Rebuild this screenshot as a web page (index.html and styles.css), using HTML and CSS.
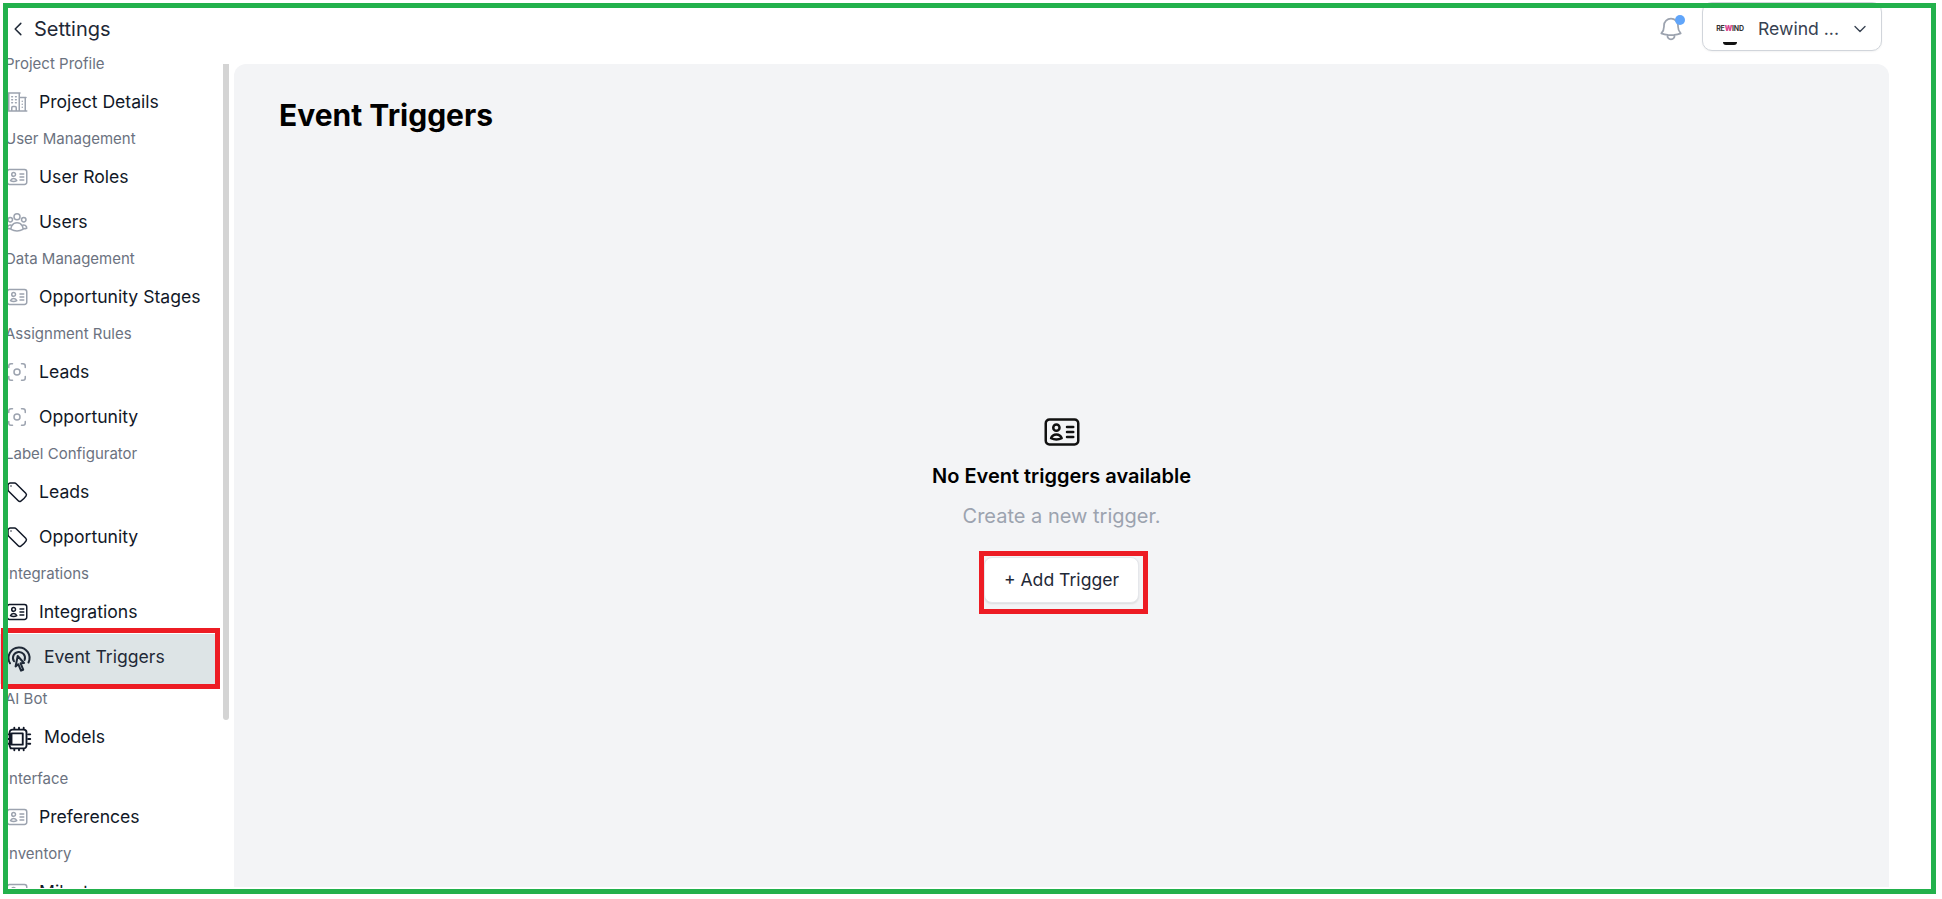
FILE: index.html
```html
<!DOCTYPE html>
<html lang="en">
<head>
    <meta charset="UTF-8">
    <meta name="viewport" content="width=device-width, initial-scale=1.0">
    <title>Event Triggers</title>
    <link rel="stylesheet" href="styles.css">
</head>
<body>
    <svg class="defs" width="0" height="0">
        <symbol id="i-card" viewBox="0 0 24 24"><path d="M15 9h3.75M15 12h3.75M15 15h3.75M4.5 19.5h15a2.25 2.25 0 002.25-2.25V6.75A2.25 2.25 0 0019.5 4.5h-15a2.25 2.25 0 00-2.25 2.25v10.5A2.25 2.25 0 004.5 19.5zm6-10.125a1.875 1.875 0 11-3.75 0 1.875 1.875 0 013.75 0zm1.294 6.336a6.721 6.721 0 01-3.17.789 6.721 6.721 0 01-3.168-.789 3.376 3.376 0 016.338 0z"/></symbol>
        <symbol id="i-view" viewBox="0 0 24 24"><path d="M7.5 3.75H6A2.25 2.25 0 003.75 6v1.5M16.5 3.75H18A2.25 2.25 0 0120.25 6v1.5m0 9V18A2.25 2.25 0 0118 20.25h-1.5m-9 0H6A2.25 2.25 0 013.75 18v-1.5M15 12a3 3 0 11-6 0 3 3 0 016 0z"/></symbol>
        <symbol id="i-tag" viewBox="0 0 24 24"><path d="M9.568 3H5.25A2.25 2.25 0 003 5.25v4.318c0 .597.237 1.17.659 1.591l9.581 9.581c.699.699 1.78.872 2.607.33a18.095 18.095 0 005.223-5.223c.542-.827.369-1.908-.33-2.607L11.16 3.66A2.25 2.25 0 009.568 3z"/><path d="M6 6h.008v.008H6V6z"/></symbol>
    </svg>

    <div class="shot">
        <header class="topbar">
            <div class="back">
                <svg class="back-icon" viewBox="0 0 24 24"><path d="M15.75 19.5L8.25 12l7.5-7.5"/></svg>
                <span>Settings</span>
            </div>
            <div class="top-right">
                <div class="bell">
                    <svg viewBox="0 0 24 24"><path d="M14.857 17.082a23.848 23.848 0 005.454-1.31A8.967 8.967 0 0118 9.75v-.7V9A6 6 0 006 9v.75a8.967 8.967 0 01-2.312 6.022c1.733.64 3.56 1.085 5.455 1.31m5.714 0a24.255 24.255 0 01-5.714 0m5.714 0a3 3 0 11-5.714 0"/></svg>
                    <span class="bell-dot"></span>
                </div>
                <div class="project-select">
                    <div class="logo"><span>RE<b>W</b>IND</span></div>
                    <span class="project-name">Rewind ...</span>
                    <svg class="chev" viewBox="0 0 24 24"><path d="M19.5 8.25l-7.5 7.5-7.5-7.5"/></svg>
                </div>
            </div>
        </header>

        <div class="content">
            <nav class="sidebar">
                <p class="group">Project Profile</p>
                <a class="item muted">
                    <svg class="icon" viewBox="0 0 24 24"><path d="M2.25 21h19.5m-18-18v18m10.5-18v18m6-13.5V21M6.75 6.75h.75m-.75 3h.75m-.75 3h.75m3-6h.75m-.75 3h.75m-.75 3h.75M6.75 21v-3.375c0-.621.504-1.125 1.125-1.125h2.25c.621 0 1.125.504 1.125 1.125V21M3 3h12m-.75 4.5H21m-3.75 3.75h.008v.008h-.008v-.008zm0 3h.008v.008h-.008v-.008zm0 3h.008v.008h-.008v-.008z"/></svg>
                    Project Details
                </a>
                <p class="group">User Management</p>
                <a class="item muted"><svg class="icon"><use href="#i-card"/></svg>User Roles</a>
                <a class="item muted">
                    <svg class="icon" viewBox="0 0 24 24"><path d="M18 18.72a9.094 9.094 0 003.741-.479 3 3 0 00-4.682-2.72m.94 3.198l.001.031c0 .225-.012.447-.037.666A11.944 11.944 0 0112 21c-2.17 0-4.207-.576-5.963-1.584A6.062 6.062 0 016 18.719m12 0a5.971 5.971 0 00-.941-3.197m0 0A5.995 5.995 0 0012 12.75a5.995 5.995 0 00-5.058 2.772m0 0a3 3 0 00-4.681 2.72 8.986 8.986 0 003.74.477m.94-3.197a5.971 5.971 0 00-.94 3.197M15 6.75a3 3 0 11-6 0 3 3 0 016 0zm6 3a2.25 2.25 0 11-4.5 0 2.25 2.25 0 014.5 0zm-13.5 0a2.25 2.25 0 11-4.5 0 2.25 2.25 0 014.5 0z"/></svg>
                    Users
                </a>
                <p class="group">Data Management</p>
                <a class="item muted"><svg class="icon"><use href="#i-card"/></svg>Opportunity Stages</a>
                <p class="group">Assignment Rules</p>
                <a class="item muted"><svg class="icon"><use href="#i-view"/></svg>Leads</a>
                <a class="item muted"><svg class="icon"><use href="#i-view"/></svg>Opportunity</a>
                <p class="group">Label Configurator</p>
                <a class="item"><svg class="icon"><use href="#i-tag"/></svg>Leads</a>
                <a class="item"><svg class="icon"><use href="#i-tag"/></svg>Opportunity</a>
                <p class="group">Integrations</p>
                <a class="item"><svg class="icon"><use href="#i-card"/></svg>Integrations</a>
                <a class="item item-big active">
                    <svg class="icon icon-rays" viewBox="0 0 30 30">
                        <path d="M6 21.3A10.5 10.5 0 1 1 24.5 20.5"/>
                        <path d="M10 19.3A6 6 0 1 1 20.6 18"/>
                        <path class="arrow" d="M13.7 14l6.3 7-3.4.3 2.6 6.4-2.2.9-2.7-6.4-2.7 2.2z"/>
                    </svg>
                    Event Triggers
                </a>
                <p class="group">AI Bot</p>
                <a class="item item-big">
                    <svg class="icon" viewBox="0 0 24 24"><path d="M8.25 3v1.5M4.5 8.25H3m18 0h-1.5M4.5 12H3m18 0h-1.5m-15 3.75H3m18 0h-1.5M8.25 19.5V21M12 3v1.5m0 15V21m3.75-18v1.5m0 15V21m-10.5-1.5h10.5a2.25 2.25 0 002.25-2.25V6.75a2.25 2.25 0 00-2.25-2.25H6.75A2.25 2.25 0 004.5 6.75v10.5a2.25 2.25 0 002.25 2.25zm.75-12h9v9h-9v-9z"/></svg>
                    Models
                </a>
                <p class="group">Interface</p>
                <a class="item muted"><svg class="icon"><use href="#i-card"/></svg>Preferences</a>
                <p class="group">Inventory</p>
                <a class="item muted"><svg class="icon"><use href="#i-card"/></svg>Milestones</a>
                <div class="scroll-thumb"></div>
            </nav>

            <main class="panel">
                <h1>Event Triggers</h1>
                <div class="empty">
                    <svg class="empty-icon"><use href="#i-card"/></svg>
                    <h3>No Event triggers available</h3>
                    <p>Create a new trigger.</p>
                    <button class="add-btn">+ Add Trigger</button>
                </div>
            </main>
        </div>

        <!-- annotation boxes drawn over the screenshot -->
        <div class="mark mark-nav"></div>
        <div class="mark mark-btn"></div>
        <div class="frame"></div>
    </div>
</body>
</html>
```

FILE: styles.css
```css
* {
    box-sizing: border-box;
}

body {
    margin: 0;
    background-color: #fff;
    font-family: Inter, "Liberation Sans", sans-serif;
    color: #111827;
}

.defs {
    position: absolute;
}

svg {
    fill: none;
    stroke: currentColor;
    stroke-width: 1.5;
    stroke-linecap: round;
    stroke-linejoin: round;
}

.shot {
    position: relative;
    width: 1942px;
    height: 899px;
    overflow: hidden;
}

/* top bar */
.topbar {
    display: flex;
    justify-content: space-between;
    height: 48px;
    padding-right: 60px;
}

.back {
    display: flex;
    align-items: center;
    gap: 7px;
    padding: 10px 0 0 9px;
    font-size: 20px;
    color: #1f2937;
}

.back-icon {
    width: 18px;
    height: 18px;
    stroke-width: 2;
}

.top-right {
    display: flex;
    align-items: flex-start;
    gap: 17px;
}

.bell {
    position: relative;
    width: 28px;
    height: 28px;
    margin-top: 15px;
    color: #9ca3af;
}

.bell svg {
    width: 28px;
    height: 28px;
}

.bell-dot {
    position: absolute;
    top: 0;
    right: 0;
    width: 10px;
    height: 10px;
    border-radius: 50%;
    background-color: #60a5fa;
}

.project-select {
    display: flex;
    align-items: center;
    width: 180px;
    height: 49px;
    margin-top: 2px;
    padding: 4px 13px 0 13px;
    border: 1px solid #d1d5db;
    border-radius: 10px;
    box-shadow: 0 1px 2px rgba(0, 0, 0, 0.05);
    background-color: #fff;
}

.logo {
    position: relative;
    display: flex;
    align-items: center;
    justify-content: center;
    flex-shrink: 0;
    width: 28px;
    height: 32px;
    font-size: 7px;
    font-weight: 700;
    letter-spacing: -0.2px;
    color: #333;
}

.logo b {
    color: #d9468f;
}

/* black curve at the foot of the logo */
.logo::after {
    content: "";
    position: absolute;
    bottom: 0;
    left: 7px;
    width: 14px;
    height: 3px;
    border-radius: 0 0 7px 7px;
    background-color: #111;
}

.project-name {
    margin-left: 14px;
    font-size: 17.6px;
    color: #374151;
    white-space: nowrap;
}

.chev {
    width: 16px;
    height: 16px;
    margin-left: auto;
    stroke-width: 2;
    color: #374151;
}

/* sidebar */
.content {
    display: flex;
}

.sidebar {
    position: relative;
    flex-shrink: 0;
    width: 234px;
    height: 840px;
    padding-top: 1px;
    overflow: hidden;
}

.group {
    height: 30px;
    margin: 0;
    padding-left: 5px;
    font-size: 15px;
    line-height: 30px;
    color: #6b7280;
}

.item {
    display: flex;
    align-items: center;
    gap: 10px;
    width: 220px;
    height: 45px;
    padding-left: 5px;
    font-size: 17.6px;
    color: #111827;
}

.icon {
    flex-shrink: 0;
    width: 24px;
    height: 24px;
}

.muted .icon {
    color: #9ca3af;
}

.item-big {
    height: 50px;
    padding-left: 4px;
    padding-bottom: 5px;
}

.item-big .icon {
    width: 30px;
    height: 30px;
    margin-top: 5px;
}

.item-big .icon-rays {
    margin-top: 1px;
    stroke-width: 2;
}

.item.active {
    background-color: #dde4e6;
    color: #1f2937;
}

.arrow {
    fill: #dde4e6;
}

.scroll-thumb {
    position: absolute;
    top: 16px;
    left: 223px;
    width: 6px;
    height: 656px;
    border-radius: 0 0 3px 3px;
    background-color: #d4d4d4;
}

/* main panel */
.panel {
    width: 1655px;
    height: 823px;
    margin-top: 16px;
    padding: 33px 45px 0;
    border-radius: 12px 12px 0 0;
    background-color: #f3f4f6;
}

.panel h1 {
    margin: 0;
    font-size: 30px;
    line-height: 36px;
    font-weight: 700;
    color: #000;
}

.empty {
    display: flex;
    flex-direction: column;
    align-items: center;
    margin-top: 279px;
}

.empty-icon {
    width: 40px;
    height: 40px;
    color: #111;
}

.empty h3 {
    margin: 10px 0 0;
    font-size: 20px;
    line-height: 28px;
    font-weight: 600;
    color: #000;
}

.empty p {
    margin: 12px 0 0;
    font-size: 20px;
    line-height: 28px;
    color: #9ca3af;
}

.add-btn {
    width: 155px;
    height: 46px;
    margin-top: 27px;
    padding-bottom: 3px;
    border: 1px solid #e5e7eb;
    border-radius: 8px;
    background-color: #fff;
    box-shadow: 0 1px 2px rgba(0, 0, 0, 0.1);
    font-family: inherit;
    font-size: 17.6px;
    color: #1f2937;
}

/* annotations */
.mark {
    position: absolute;
    border: 5px solid #ed1c24;
}

.mark-nav {
    top: 628px;
    left: 1px;
    width: 219px;
    height: 61px;
}

.mark-btn {
    top: 551px;
    left: 979px;
    width: 169px;
    height: 63px;
}

.frame {
    position: absolute;
    top: 3px;
    left: 3px;
    width: 1933px;
    height: 891px;
    border: 5px solid #22b14c;
}
```
